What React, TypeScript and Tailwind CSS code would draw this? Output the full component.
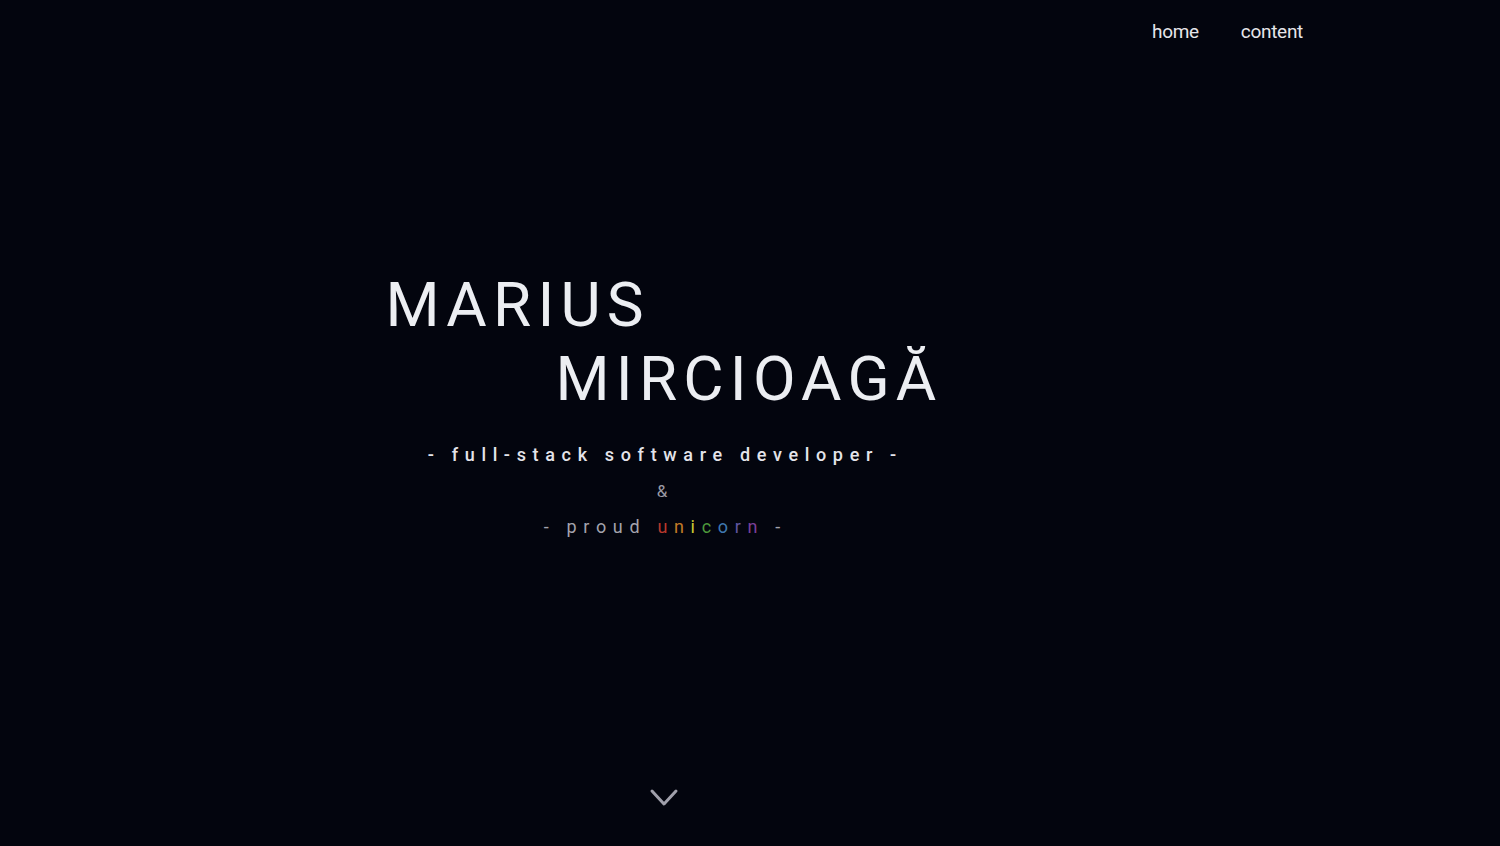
const unicorn = [
  { c: "u", cls: "text-[#b8382c]" },
  { c: "n", cls: "text-[#c27a26]" },
  { c: "i", cls: "text-[#c9c832]" },
  { c: "c", cls: "text-[#4e9a3c]" },
  { c: "o", cls: "text-[#3f78b0]" },
  { c: "r", cls: "text-[#5f55a0]" },
  { c: "n", cls: "text-[#7a3f98]" },
];

export default function App() {
  return (
    <div className="h-[846px] w-full bg-[#03050e] overflow-hidden flex flex-col font-['Roboto',sans-serif]">
      {/* nav */}
      <nav className="flex justify-end gap-[42px] pr-[197px] pt-[18px] h-[60px]">
        <a className="text-[19px] leading-[28px] text-[#e6e6ea] tracking-[-0.3px]">home</a>
        <a className="text-[19px] leading-[28px] text-[#e6e6ea] tracking-[-0.3px]">content</a>
      </nav>

      {/* hero */}
      <div className="w-[1324px] flex-1 flex flex-col items-center pt-[208px]">
        <div className="flex flex-col font-normal text-[#eceef2] text-[62px] leading-[74px] tracking-[0.1em] pl-[4px]">
          <span>MARIUS</span>
          <span className="pl-[170px]">MIRCIOAGĂ</span>
        </div>

        <div className="mt-[21px] flex flex-col items-center">
          <p className="text-[18px] leading-[36px] font-medium text-[#e4e4ea] tracking-[0.37em] pl-[0.37em]">
            - full-stack software developer -
          </p>
          <p className="text-[17px] leading-[36px] text-[#9a9aa4]">&amp;</p>
          <p className="text-[18px] leading-[36px] text-[#a3a3ad] tracking-[0.37em] pl-[0.37em]">
            - proud{" "}
            {unicorn.map((u, i) => (
              <span key={i} className={u.cls}>
                {u.c}
              </span>
            ))}{" "}
            -
          </p>
        </div>

        <div className="mt-auto mb-[37px] pl-[4px]">
          <svg width="32" height="22" viewBox="0 0 32 22" fill="none" className="text-[#a0a0ab]">
            <polyline
              points="4,4 16,17 28,4"
              stroke="currentColor"
              strokeWidth="3"
              strokeLinecap="round"
              strokeLinejoin="round"
            />
          </svg>
        </div>
      </div>
    </div>
  );
}
